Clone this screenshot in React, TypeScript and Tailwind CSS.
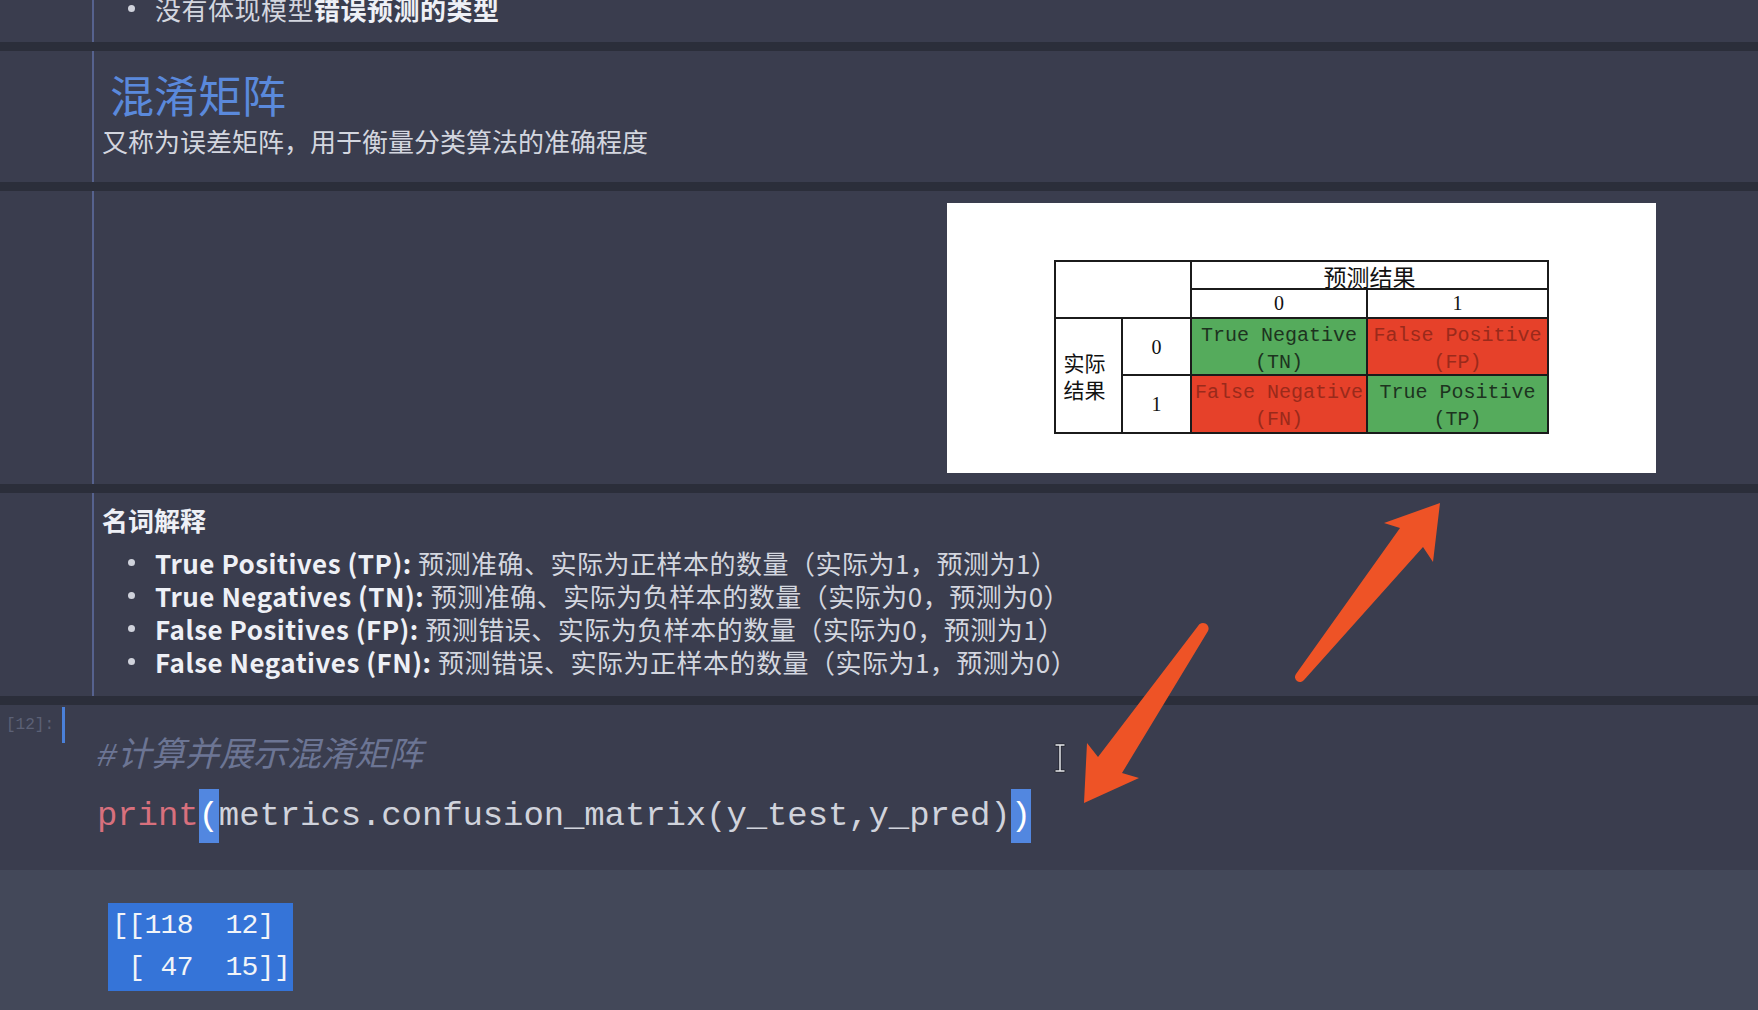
import type { ReactNode } from "react";

const mono = "font-['Liberation_Mono','Noto_Sans_CJK_SC',monospace]";

function MdCell({ className = "", children }: { className?: string; children: ReactNode }) {
  return (
    <div className={`flex bg-[#3a3d4e] ${className}`}>
      <div className="w-[92px] shrink-0" />
      <div className="flex-1 border-l-2 border-[#56628e] pl-[8px] flex flex-col">{children}</div>
    </div>
  );
}

function Bullet({ label, text }: { label?: string; text: ReactNode }) {
  return (
    <li className="flex items-center h-[33px] text-[26px] leading-[33px] whitespace-nowrap">
      <span className="ml-[26px] w-[7px] h-[7px] rounded-full bg-[#cfd2db] shrink-0" />
      <span className="ml-[20px] tracking-[0.5px]">
        {label && <b className="font-bold text-[#eef0f6]">{label} </b>}
        {text}
      </span>
    </li>
  );
}

// one coloured quadrant of the confusion-matrix picture
function Quad({ bg, fg, a, b }: { bg: string; fg: string; a: string; b: string }) {
  return (
    <td className={`${bg} border-2 border-[#1b1b1b] p-0 align-top`}>
      <div
        className={`h-[54px] overflow-hidden pt-[3px] text-center text-[20px] leading-[27px] whitespace-nowrap ${fg} font-['Liberation_Mono',monospace]`}
      >
        <div>{a}</div>
        <div>{b}</div>
      </div>
    </td>
  );
}

function MatrixPicture() {
  const cell = "border-2 border-[#1b1b1b] p-0 text-center text-[#111]";
  return (
    <div className="w-[709px] h-[270px] bg-white pt-[57px]">
      <table className="mx-auto w-[493px] table-fixed border-collapse">
        <colgroup>
          <col className="w-[67px]" />
          <col className="w-[69px]" />
          <col className="w-[176px]" />
          <col className="w-[181px]" />
        </colgroup>
        <tbody>
          <tr className="h-[28px]">
            <td rowSpan={2} colSpan={2} className={cell} />
            <td colSpan={2} className={`${cell} align-bottom text-[23px] leading-[24px]`}>
              预测结果
            </td>
          </tr>
          <tr className="h-[29px]">
            <td className={`${cell} text-[20px] leading-[27px] font-['Liberation_Serif',serif]`}>0</td>
            <td className={`${cell} text-[20px] leading-[27px] font-['Liberation_Serif',serif]`}>1</td>
          </tr>
          <tr className="h-[57px]">
            <td rowSpan={2} className={`${cell} text-[21px] leading-[27px] pr-[8px]`}>
              <div>实际</div>
              <div>结果</div>
            </td>
            <td className={`${cell} text-[20px] font-['Liberation_Serif',serif]`}>0</td>
            <Quad bg="bg-[#55ab5c]" fg="text-[#1d331f]" a="True Negative" b="(TN)" />
            <Quad bg="bg-[#e6412a]" fg="text-[#9a2a1b]" a="False Positive" b="(FP)" />
          </tr>
          <tr className="h-[58px]">
            <td className={`${cell} text-[20px] font-['Liberation_Serif',serif]`}>1</td>
            <Quad bg="bg-[#e6412a]" fg="text-[#9a2a1b]" a="False Negative" b="(FN)" />
            <Quad bg="bg-[#55ab5c]" fg="text-[#1d331f]" a="True Positive" b="(TP)" />
          </tr>
        </tbody>
      </table>
    </div>
  );
}

export default function App() {
  return (
    <div className="relative w-[1758px] h-[1010px] overflow-hidden bg-[#2b2e3a] text-[#d3d6df] font-['Noto_Sans_CJK_SC',sans-serif]">
      <div className="flex flex-col gap-[9px] h-full">
        {/* previous markdown cell, scrolled mostly out of view */}
        <MdCell className="h-[42px] overflow-hidden">
          <ul className="mt-[-8px]">
            <Bullet
              text={
                <>
                  没有体现模型<b className="font-bold text-[#eef0f6]">错误预测的类型</b>
                </>
              }
            />
          </ul>
        </MdCell>

        <MdCell className="h-[131px]">
          <h2 className="pt-[17px] ml-[8px] text-[44px] leading-[52px] text-[#5a89dc]">混淆矩阵</h2>
          <p className="mt-[5px] text-[26px] leading-[32px]">又称为误差矩阵，用于衡量分类算法的准确程度</p>
        </MdCell>

        <MdCell className="h-[293px]">
          <div className="flex justify-end pt-[12px] pr-[102px]">
            <MatrixPicture />
          </div>
        </MdCell>

        <MdCell className="h-[203px]">
          <h3 className="pt-[10px] text-[26px] leading-[33px] font-bold text-[#eef0f6]">名词解释</h3>
          <ul className="mt-[10px]">
            <Bullet label="True Positives (TP):" text="预测准确、实际为正样本的数量（实际为1，预测为1）" />
            <Bullet label="True Negatives (TN):" text="预测准确、实际为负样本的数量（实际为0，预测为0）" />
            <Bullet label="False Positives (FP):" text="预测错误、实际为负样本的数量（实际为0，预测为1）" />
            <Bullet label="False Negatives (FN):" text="预测错误、实际为正样本的数量（实际为1，预测为0）" />
          </ul>
        </MdCell>

        {/* code cell + its output */}
        <div className="flex-1 flex flex-col">
          <div className="h-[165px] flex bg-[#3a3d4e]">
            <div className={`w-[62px] shrink-0 pl-[6px] pt-[10px] text-[16px] leading-[20px] text-[#5c6176] ${mono}`}>
              [12]:
            </div>
            <div className="w-[3px] h-[36px] mt-[2px] bg-[#4a80d8] shrink-0" />
            <div className={`pl-[32px] pt-[25px] text-[34px] tracking-[-0.1px] whitespace-pre ${mono}`}>
              <div className="h-[54px] leading-[54px] italic text-[#6c7594]">#计算并展示混淆矩阵</div>
              <div className="mt-[5px] h-[54px] leading-[54px] text-[#d0d3dc]">
                <span className="text-[#d8707d]">print</span>
                <span className="inline-block bg-[#5287e0] text-white">(</span>
                metrics.confusion_matrix(y_test,y_pred)
                <span className="inline-block bg-[#5287e0] text-white">)</span>
              </div>
            </div>
          </div>
          <div className="flex-1 bg-[#434859] pt-[33px] pl-[108px]">
            <div
              className={`w-[185px] py-[2px] pl-[4px] bg-[#3574d8] text-[#f2f4f8] text-[28px] leading-[42px] tracking-[-0.6px] whitespace-pre ${mono}`}
            >
              <div>[[118  12]</div>
              <div> [ 47  15]]</div>
            </div>
          </div>
        </div>
      </div>

      {/* annotation overlay: arrows and mouse text cursor */}
      <svg
        className="absolute inset-0 pointer-events-none"
        width="1758"
        height="1010"
        viewBox="0 0 1758 1010"
      >
        <path
          d="M1440 503 L1433 562 L1423 547 L1304 680 A4.5 4.5 0 0 1 1296 674 L1400 528 L1384 523 Z"
          fill="#ee5326"
        />
        <path
          d="M1084 803 L1087 743 L1098 757 L1198 626 A5 5 0 0 1 1208 631 L1122 773 L1139 778 Z"
          fill="#ee5326"
        />
        <g stroke="#1e2028" strokeWidth="3" fill="none" strokeLinecap="round">
          <path d="M1056 745 H1064 M1060 745 V771 M1056 771 H1064" />
        </g>
        <g stroke="#e9eaee" strokeWidth="1.5" fill="none" strokeLinecap="round">
          <path d="M1056 745 H1064 M1060 745 V771 M1056 771 H1064" />
        </g>
      </svg>
    </div>
  );
}
